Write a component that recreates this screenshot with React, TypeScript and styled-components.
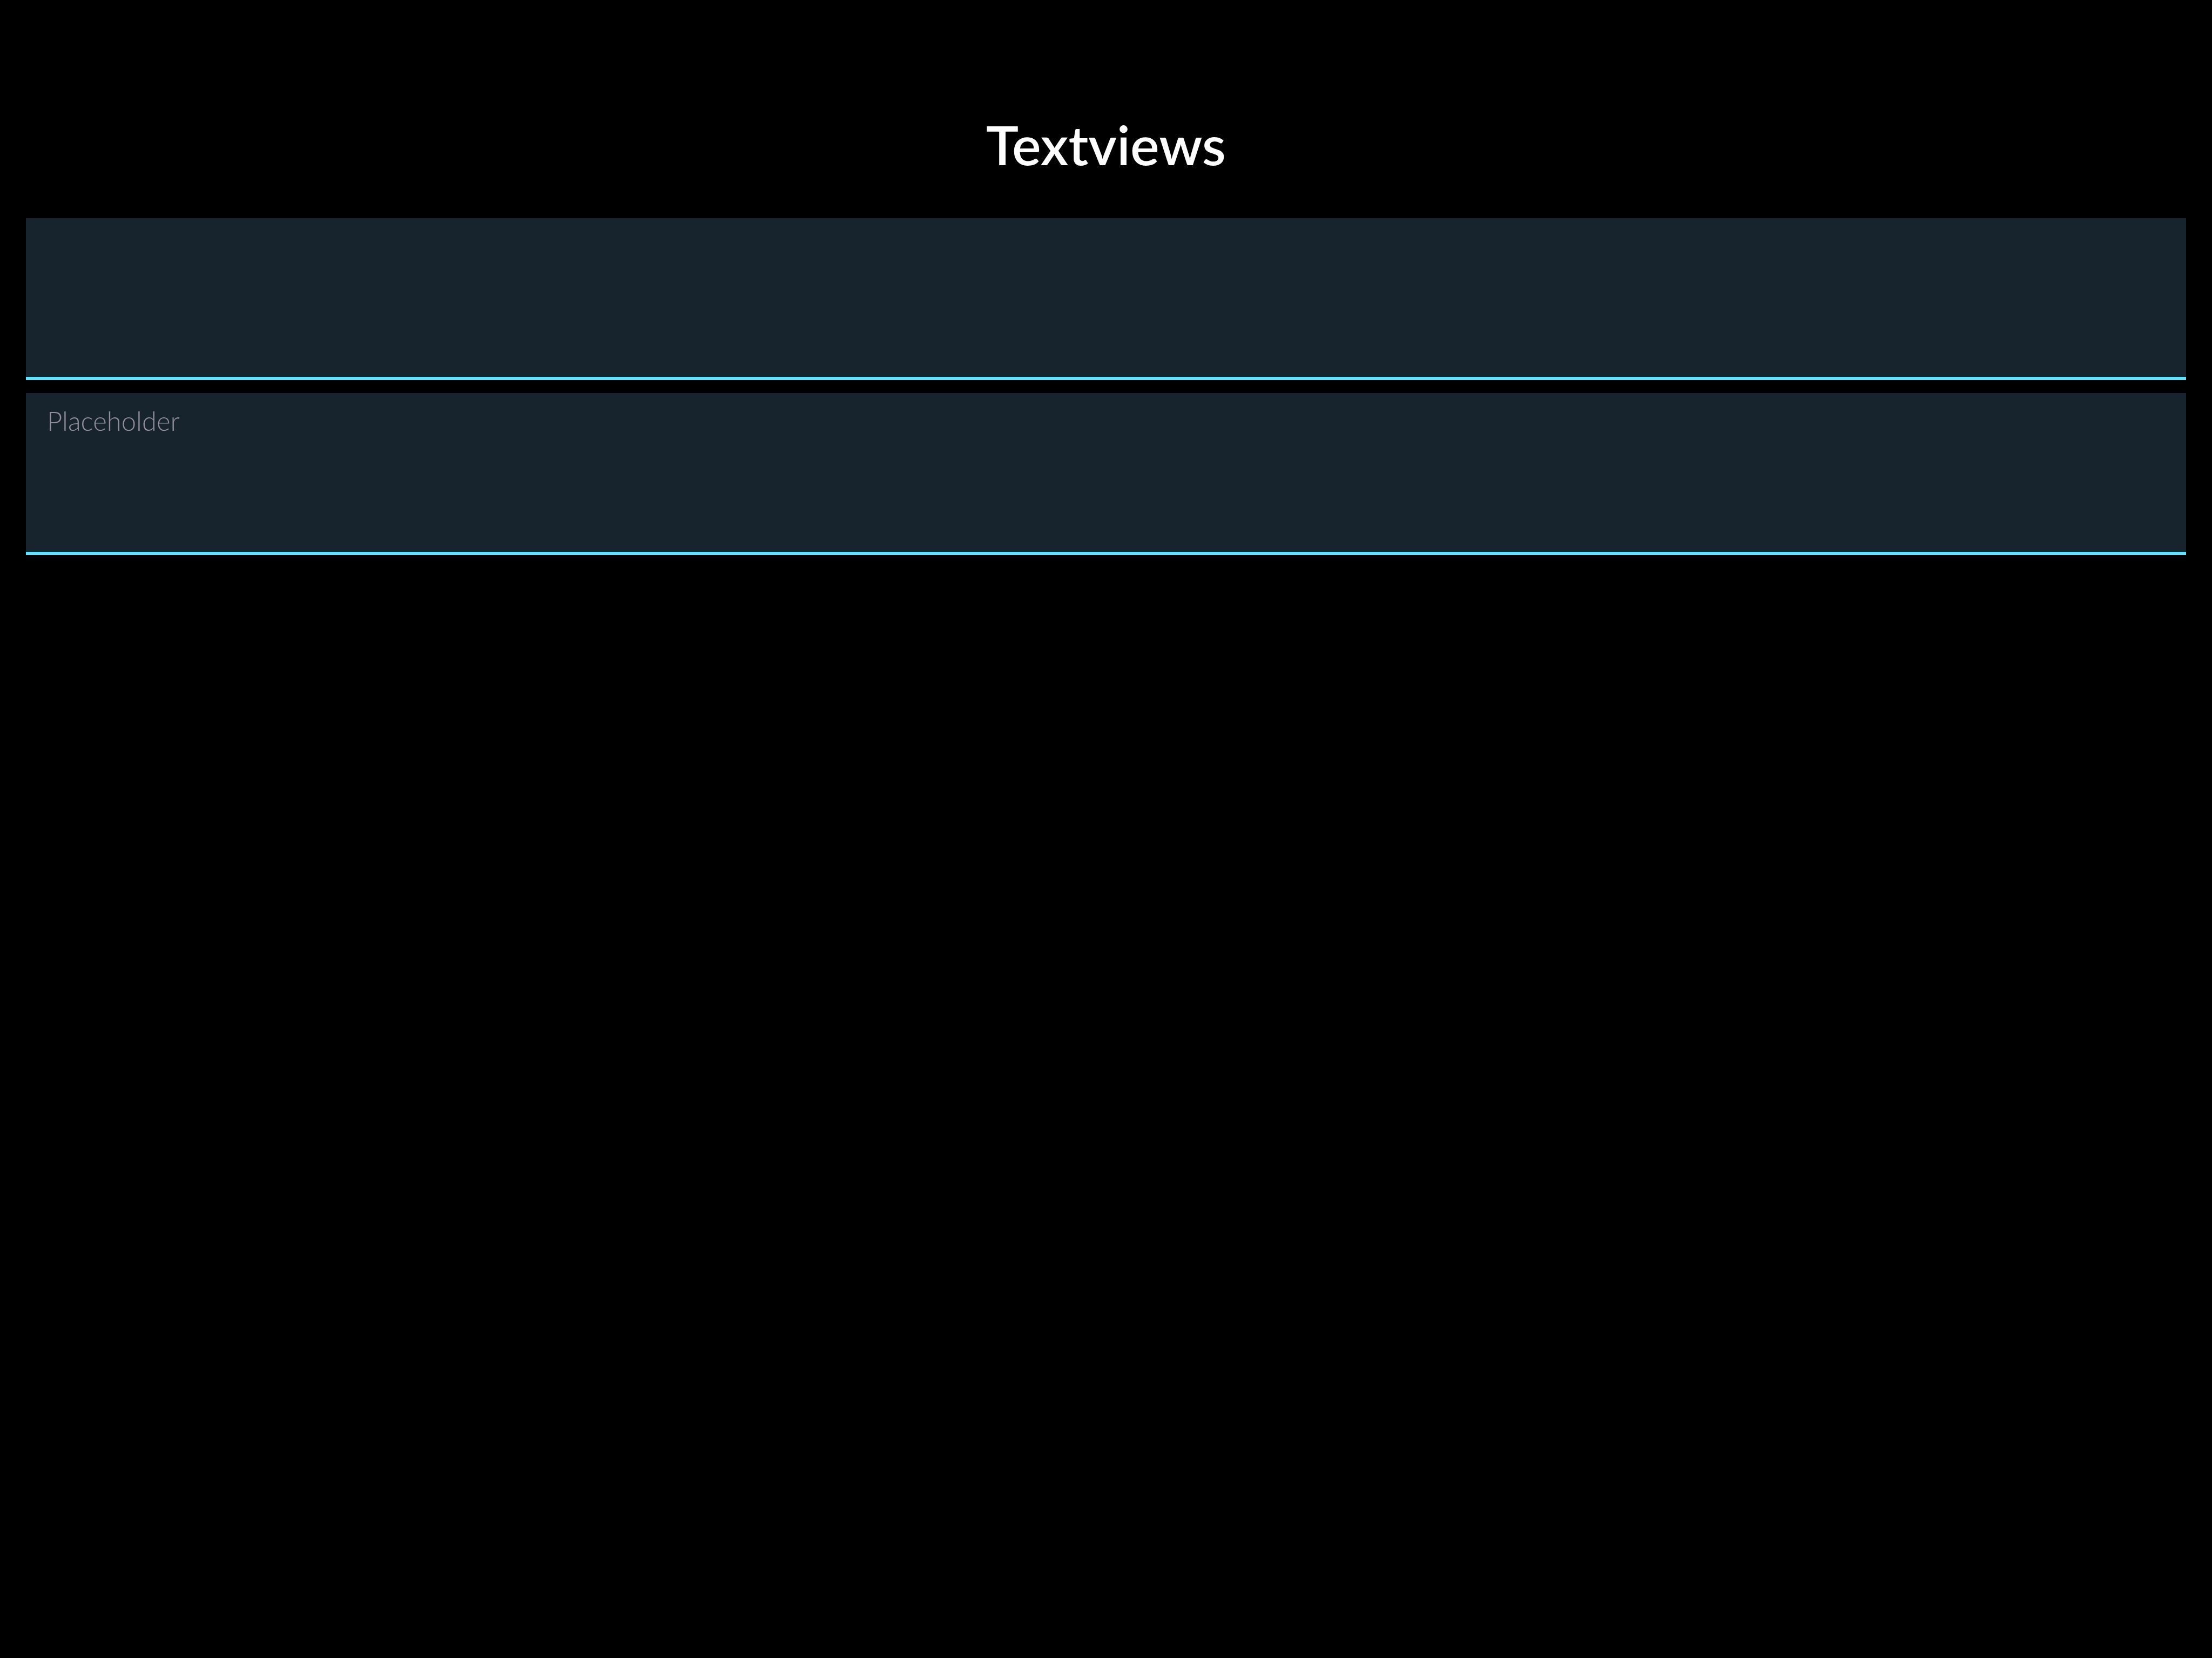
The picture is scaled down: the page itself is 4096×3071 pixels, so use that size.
import React from "react";
import styled, { createGlobalStyle } from "styled-components";

const GlobalStyle = createGlobalStyle`
  body {
    margin: 0;
    background: #000;
  }
`;

const Page = styled.main`
  display: flex;
  flex-direction: column;
  gap: 72px;
  min-height: 100vh;
  padding: 202px 48px 48px;
  box-sizing: border-box;
  font-family: Lato, "Open Sans", sans-serif;
`;

const Title = styled.h1`
  margin: 0;
  color: #fff;
  font-size: 101px;
  font-weight: 600;
  line-height: 130px;
  text-align: center;
`;

const FieldList = styled.div`
  display: flex;
  flex-direction: column;
  gap: 24px;
`;

const TextView = styled.textarea`
  display: block;
  width: 100%;
  height: 300px;
  box-sizing: border-box;
  margin: 0;
  padding: 22px 39px;
  border: 0;
  border-bottom: 6px solid #62e2ff;
  border-radius: 0;
  outline: none;
  resize: none;
  background: #17242e;
  color: #fff;
  font-family: inherit;
  font-size: 49px;
  font-weight: 300;
  line-height: 58px;

  &::placeholder {
    color: #928f9b;
    opacity: 1;
  }
`;

export default function App() {
  return (
    <Page>
      <GlobalStyle />
      <Title id="title">Textviews</Title>
      <FieldList>
        <TextView aria-labelledby="title" />
        <TextView aria-labelledby="title" placeholder="Placeholder" />
      </FieldList>
    </Page>
  );
}
